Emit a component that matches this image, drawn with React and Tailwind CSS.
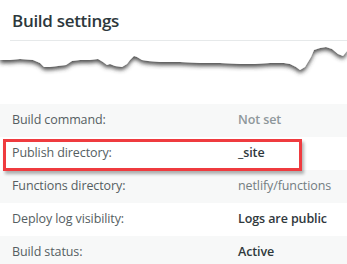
import React from "react";

// ─── Torn edge ───────────────────────────────────────────────────────────
const TornEdge = () => (
    <svg width="347" height="40" viewBox="0 0 347 40" className="block">
        <defs>
            <filter id="tear" x="-5%" y="-20%" width="110%" height="170%">
                <feDropShadow dx="0" dy="3" stdDeviation="2" floodColor="#3a3a3a" floodOpacity="0.9" />
            </filter>
        </defs>
        <path
            filter="url(#tear)"
            fill="#fff"
            d="M0 0 H347 V10 L343 15 L338 13 L332 8 L326 6 L320 7 L314 9 L311 16 L305 26 L300 29 L296 26 L290 23 L284 22 L270 22 L255 23 L240 23 L220 22 L200 22 L180 21 L160 21 L148 20 L142 19 L137 16 L134 15 L130 19 L127 23 L122 26 L115 25 L110 23 L107 24 L103 21 L98 18 L90 19 L80 19 L72 20 L66 24 L58 25 L50 26 L44 26 L40 22 L33 19 L20 18 L10 19 L0 19 Z"
        />
    </svg>
);

// ─── Setting row ─────────────────────────────────────────────────────────
const Row = ({ label, value, valueClass, shaded }) => (
    <div className={`flex items-center h-[33px] text-[12.5px] tracking-[-0.1px] ${shaded ? "bg-[#f7f8f8]" : "bg-white"}`}>
        <span className="w-[238px] pl-3 text-[#555e62]">{label}</span>
        <span className={valueClass}>{value}</span>
    </div>
);

const rows = [
    { label: "Build command:", value: "Not set", valueClass: "font-semibold text-[#8e979b]", shaded: true },
    { label: "Publish directory:", value: "_site", valueClass: "font-semibold text-[#2f383c]" },
    { label: "Functions directory:", value: "netlify/functions", valueClass: "text-[#737d81]", shaded: true },
    { label: "Deploy log visibility:", value: "Logs are public", valueClass: "font-semibold text-[#2f383c]" },
    { label: "Build status:", value: "Active", valueClass: "font-semibold text-[#2f383c]", shaded: true },
];

export default function App() {
    return (
        <div className="w-[347px] h-[264px] overflow-hidden bg-white relative" style={{ fontFamily: '"Open Sans", "Noto Sans", sans-serif' }}>
            <h2 className="pl-3 pt-[9px] h-[40px] text-[17px] tracking-[-0.3px] font-semibold text-[#2d383c] leading-[24px]">Build settings</h2>
            <div className="ml-[10px] h-px bg-[#e6e9ea]" />
            <TornEdge />
            <div className="mt-[23px]">
                {rows.map((r) => (
                    <Row key={r.label} {...r} />
                ))}
            </div>

            {/* ── Highlight box ── */}
            <div className="absolute left-[3px] top-[139px] w-[299px] h-[32px] border-[3px] border-[#ef3b3f] shadow-[2px_3px_3px_rgba(0,0,0,0.3)]" />
        </div>
    );
}
